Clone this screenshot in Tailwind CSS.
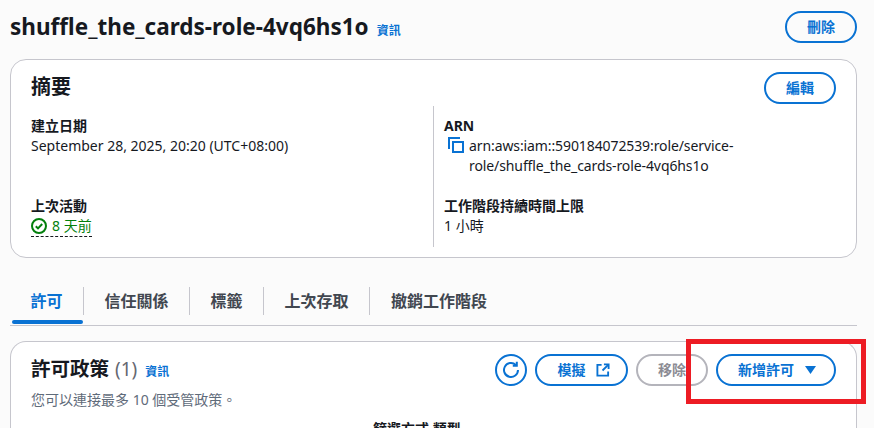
<!DOCTYPE html>
<html lang="zh-Hant">
<head>
  <meta charset="UTF-8">
  <title>shuffle_the_cards-role-4vq6hs1o</title>
  <script src="https://cdn.jsdelivr.net/npm/@tailwindcss/browser@4"></script>
</head>
<body class="relative h-[428px] w-[874px] overflow-hidden bg-[#fbfbfb] font-['Noto_Sans','Noto_Sans_CJK_TC',sans-serif] text-[14px] leading-[20px] text-[#16191f]">
  <!-- Page header -->
  <header class="flex h-[59px] items-start justify-between pl-[10px] pr-[17px] pt-[11px]">
    <div class="flex items-baseline gap-[8px]">
      <h1 class="text-[22.5px] leading-[32px] font-bold">shuffle_the_cards-role-4vq6hs1o</h1>
      <a class="text-[12px] font-bold text-[#0972d3]">資訊</a>
    </div>
    <button class="h-[32px] w-[72px] rounded-full border-2 border-[#0972d3] text-[14px] font-bold text-[#0972d3]">刪除</button>
  </header>

  <!-- Summary -->
  <section class="ml-[10px] h-[199px] w-[847px] rounded-[16px] border border-[#c6c6cd] bg-white pl-[20px] pr-[20px] pt-[12px]">
    <div class="flex h-[34px] items-start justify-between">
      <h2 class="text-[20px] leading-[30px] font-bold">摘要</h2>
      <button class="h-[32px] w-[72px] rounded-full border-2 border-[#0972d3] font-bold text-[#0972d3]">編輯</button>
    </div>
    <div class="grid h-[141px] grid-cols-[402px_1fr]">
      <div class="flex flex-col justify-between py-[10px]">
        <div>
          <div class="font-bold">建立日期</div>
          <div>September 28, 2025, 20:20 (UTC+08:00)</div>
        </div>
        <div>
          <div class="font-bold">上次活動</div>
          <div class="flex w-fit items-center gap-[5px] border-b border-dashed border-[#16191f] text-[#037f0c]">
            <svg width="16" height="16" viewBox="0 0 16 16" fill="none" stroke="#037f0c" stroke-width="2"><circle cx="8" cy="8" r="7"/><path d="M4.8 8.2l2.2 2.2 4.2-4.4"/></svg>
            <span>8 天前</span>
          </div>
        </div>
      </div>
      <div class="flex flex-col justify-between border-l border-[#c6c6cd] pb-[11px] pl-[10px] pt-[10px]">
        <div>
          <div class="font-bold">ARN</div>
          <div class="flex gap-[5px]">
            <svg class="ml-[4px] mt-[1px] shrink-0" width="16" height="16" viewBox="0 0 16 16" fill="none" stroke="#0972d3" stroke-width="2"><path d="M1 12V1h11"/><path d="M5 5h10v10H5z"/></svg>
            <span class="w-[290px] tracking-[-0.1px]">arn:aws:iam::590184072539:role/service-role/shuffle_the_cards-role-4vq6hs1o</span>
          </div>
        </div>
        <div>
          <div class="font-bold">工作階段持續時間上限</div>
          <div>1 小時</div>
        </div>
      </div>
    </div>
  </section>

  <!-- Tabs -->
  <nav class="ml-[10px] mt-[29px] flex h-[39px] w-[847px] items-start border-b border-[#c6c6cd] text-[16px] font-bold text-[#414750]">
    <div class="relative flex h-[28px] w-[74px] items-center justify-center border-r border-[#c6c6cd] text-[#0972d3]">
      許可
      <span class="absolute left-[2px] top-[33px] h-[4px] w-[71px] rounded-[2px] bg-[#0972d3]"></span>
    </div>
    <div class="flex h-[28px] w-[106px] items-center justify-center border-r border-[#c6c6cd]">信任關係</div>
    <div class="flex h-[28px] w-[74px] items-center justify-center border-r border-[#c6c6cd]">標籤</div>
    <div class="flex h-[28px] w-[106px] items-center justify-center border-r border-[#c6c6cd]">上次存取</div>
    <div class="flex h-[28px] items-center pl-[21px]">撤銷工作階段</div>
  </nav>

  <!-- Permission policies -->
  <section class="ml-[10px] mt-[15px] h-[120px] w-[847px] rounded-t-[16px] border border-b-0 border-[#c6c6cd] bg-white pl-[20px] pr-[20px] pt-[12px]">
    <div class="flex h-[32px] items-start justify-between">
      <div class="flex items-baseline">
        <h2 class="text-[19.5px] leading-[30px] font-bold">許可政策</h2>
        <span class="ml-[6px] text-[19px] text-[#656871]">(1)</span>
        <a class="ml-[8px] text-[12px] font-bold text-[#0972d3]">資訊</a>
      </div>
      <div class="flex items-center gap-[8px]">
        <button class="flex h-[32px] w-[32px] items-center justify-center rounded-full border-2 border-[#0972d3]">
          <svg width="18" height="18" viewBox="0 0 18 18" fill="none" stroke="#0972d3" stroke-width="2"><path d="M16 9a7 7 0 1 1-2.2-5.1"/><path d="M14.8 0.8v4h-4"/></svg>
        </button>
        <button class="flex h-[32px] w-[93px] items-center justify-center gap-[10px] rounded-full border-2 border-[#0972d3] pl-[4px] font-bold text-[#0972d3]">
          模擬
          <svg width="14" height="14" viewBox="0 0 15 15" fill="none" stroke="#0972d3" stroke-width="2"><path d="M6 2H1.5v11.5H13V9"/><path d="M8.5 1.5H13.5V6.5"/><path d="M13 2L7 8"/></svg>
        </button>
        <button class="h-[32px] w-[72px] rounded-full border-2 border-[#b4b4bb] font-bold text-[#8c8c94]">移除</button>
        <button class="flex h-[32px] w-[120px] items-center justify-center gap-[10px] rounded-full border-2 border-[#0972d3] pl-[3px] font-bold text-[#0972d3]">
          新增許可
          <svg width="13" height="10" viewBox="0 0 13 10" fill="#0972d3"><path d="M1 1h11L6.5 9z"/></svg>
        </button>
      </div>
    </div>
    <p class="mt-[4px] text-[#5f6b7a]">您可以連接最多 10 個受管政策。</p>
    <div class="ml-[342px] mt-[9px] font-bold">篩選方式 類型</div>
  </section>

  <!-- Red highlight drawn over the screenshot -->
  <div class="absolute left-[686px] top-[339px] h-[65px] w-[180px] border-[5px] border-[#ed1c24]"></div>
</body>
</html>
